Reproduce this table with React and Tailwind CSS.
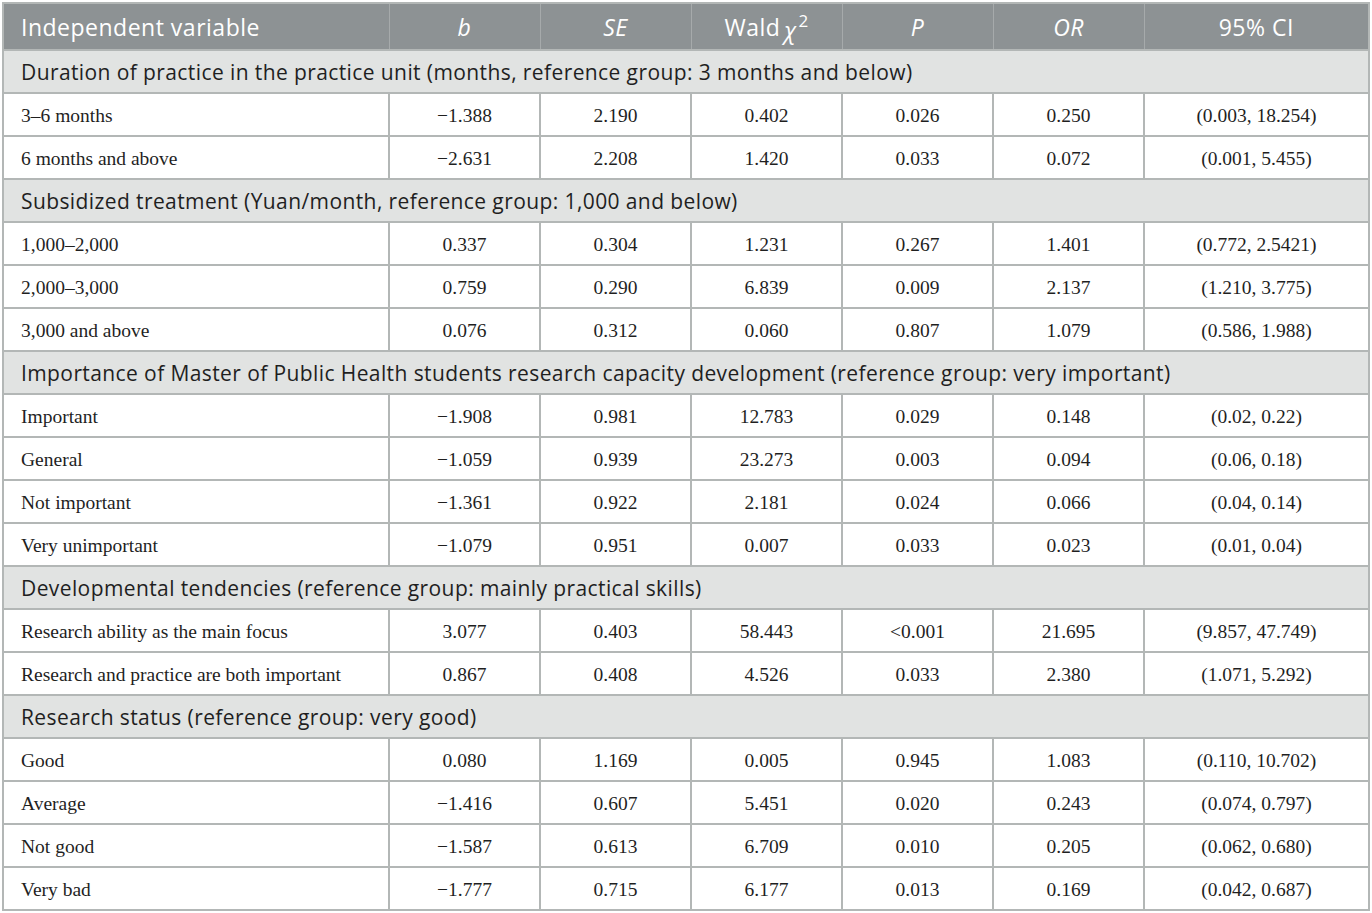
import React from "react";

const sections = [
  {
    title: "Duration of practice in the practice unit (months, reference group: 3 months and below)",
    rows: [
      ["3–6 months", "−1.388", "2.190", "0.402", "0.026", "0.250", "(0.003, 18.254)"],
      ["6 months and above", "−2.631", "2.208", "1.420", "0.033", "0.072", "(0.001, 5.455)"],
    ],
  },
  {
    title: "Subsidized treatment (Yuan/month, reference group: 1,000 and below)",
    rows: [
      ["1,000–2,000", "0.337", "0.304", "1.231", "0.267", "1.401", "(0.772, 2.5421)"],
      ["2,000–3,000", "0.759", "0.290", "6.839", "0.009", "2.137", "(1.210, 3.775)"],
      ["3,000 and above", "0.076", "0.312", "0.060", "0.807", "1.079", "(0.586, 1.988)"],
    ],
  },
  {
    title: "Importance of Master of Public Health students research capacity development (reference group: very important)",
    rows: [
      ["Important", "−1.908", "0.981", "12.783", "0.029", "0.148", "(0.02, 0.22)"],
      ["General", "−1.059", "0.939", "23.273", "0.003", "0.094", "(0.06, 0.18)"],
      ["Not important", "−1.361", "0.922", "2.181", "0.024", "0.066", "(0.04, 0.14)"],
      ["Very unimportant", "−1.079", "0.951", "0.007", "0.033", "0.023", "(0.01, 0.04)"],
    ],
  },
  {
    title: "Developmental tendencies (reference group: mainly practical skills)",
    rows: [
      ["Research ability as the main focus", "3.077", "0.403", "58.443", "<0.001", "21.695", "(9.857, 47.749)"],
      ["Research and practice are both important", "0.867", "0.408", "4.526", "0.033", "2.380", "(1.071, 5.292)"],
    ],
  },
  {
    title: "Research status (reference group: very good)",
    rows: [
      ["Good", "0.080", "1.169", "0.005", "0.945", "1.083", "(0.110, 10.702)"],
      ["Average", "−1.416", "0.607", "5.451", "0.020", "0.243", "(0.074, 0.797)"],
      ["Not good", "−1.587", "0.613", "6.709", "0.010", "0.205", "(0.062, 0.680)"],
      ["Very bad", "−1.777", "0.715", "6.177", "0.013", "0.169", "(0.042, 0.687)"],
    ],
  },
];

const sans = { fontFamily: '"Open Sans", "Noto Sans", sans-serif' };
const serif = { fontFamily: '"Liberation Serif", "DejaVu Serif", serif' };

export default function App() {
  return (
    <div className="bg-white w-[1372px] h-[913px] pt-[2px] px-[2px]">
      <table className="table-fixed w-[1368px] border-collapse border-2 border-[#b3b7b6]">
        <colgroup>
          <col className="w-[386px]" />
          <col className="w-[151px]" />
          <col className="w-[151px]" />
          <col className="w-[151px]" />
          <col className="w-[151px]" />
          <col className="w-[151px]" />
          <col />
        </colgroup>
        <thead>
          <tr className="h-[47px] bg-[#8d9294] text-white text-[23px] tracking-[0.5px]" style={sans}>
            <th className="text-left font-normal pl-[17px] pt-[2px] border-r border-[#a6aaab]">Independent variable</th>
            <th className="font-normal italic pt-[2px] border-r border-[#a6aaab]">b</th>
            <th className="font-normal italic pt-[2px] border-r border-[#a6aaab]">SE</th>
            <th className="font-normal pt-[2px] border-r border-[#a6aaab]">
              Wald<span className="italic ml-[4px] relative top-[3px]">χ</span>
              <span className="text-[17px] relative -top-[9px] ml-[2px]">2</span>
            </th>
            <th className="font-normal italic pt-[2px] border-r border-[#a6aaab]">P</th>
            <th className="font-normal italic pt-[2px] border-r border-[#a6aaab]">OR</th>
            <th className="font-normal pt-[2px]">95% CI</th>
          </tr>
        </thead>
        <tbody>
          {sections.map((s, si) => (
            <React.Fragment key={si}>
              <tr className="h-[43px] bg-[#e1e3e2] border-t-2 border-[#b3b7b6]">
                <td colSpan={7} className="pl-[17px] pt-[2px] text-[21px] tracking-[0.4px] text-[#1f1f1f] whitespace-nowrap" style={sans}>
                  {s.title}
                </td>
              </tr>
              {s.rows.map((r, ri) => (
                <tr key={ri} className="h-[43px] border-t-2 border-[#b3b7b6] text-[19.5px] text-[#1f1f1f]" style={serif}>
                  {r.map((c, ci) => (
                    <td
                      key={ci}
                      className={
                        ci === 0
                          ? "pl-[17px] pt-[3px] text-left border-r-2 border-[#b3b7b6]"
                          : ci === 6
                          ? "pt-[3px] text-center"
                          : "pt-[3px] text-center border-r-2 border-[#b3b7b6]"
                      }
                    >
                      {c}
                    </td>
                  ))}
                </tr>
              ))}
            </React.Fragment>
          ))}
        </tbody>
      </table>
    </div>
  );
}
